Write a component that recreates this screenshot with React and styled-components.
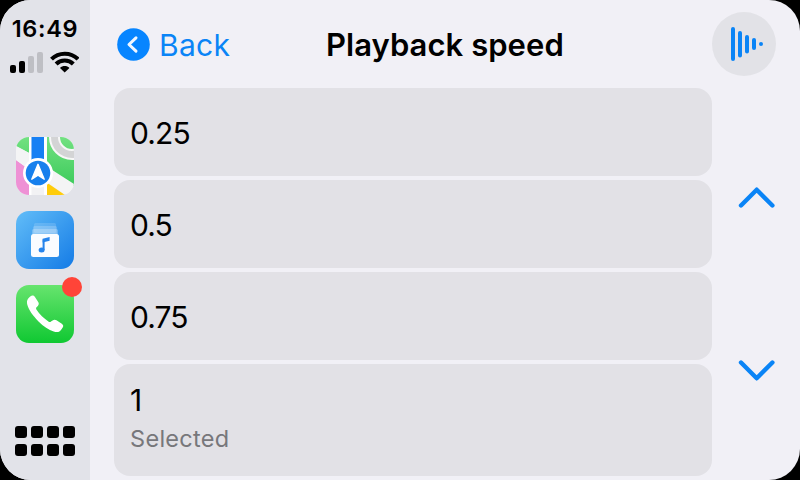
import React from "react";
import styled, { createGlobalStyle } from "styled-components";

const GlobalStyle = createGlobalStyle`
  * { box-sizing: border-box; }
  body { margin: 0; background: #000; }
`;

const Screen = styled.div`
  width: 800px;
  height: 480px;
  display: flex;
  overflow: hidden;
  border-radius: 31px;
  background: #f1f0f6;
  color: #000;
  font-family: Inter, "Liberation Sans", sans-serif;
`;

const Sidebar = styled.aside`
  width: 90px;
  flex: none;
  display: flex;
  flex-direction: column;
  align-items: center;
  padding: 15px 0 24px;
  background: #e2e3e9;
`;

const Clock = styled.div`
  height: 28px;
  line-height: 28px;
  font-size: 23.5px;
  font-weight: 570;
  letter-spacing: 0.7px;
  white-space: nowrap;
`;

const StatusRow = styled.div`
  display: flex;
  align-items: flex-end;
  gap: 7px;
  height: 22px;
  margin: 8px 2px 0 0;
`;

const SignalBars = styled.div`
  display: flex;
  align-items: flex-end;
  gap: 3px;
`;

const Bar = styled.span`
  width: 6px;
  height: ${(p) => p.$height}px;
  border-radius: 2px;
  background: ${(p) => (p.$active ? "#000" : "#bebfc4")};
`;

const Dock = styled.nav`
  display: flex;
  flex-direction: column;
  gap: 16px;
  margin-top: 64px;
`;

const AppButton = styled.button`
  position: relative;
  width: 58px;
  height: 58px;
  padding: 0;
  border: 0;
  background: none;
`;

const AppIcon = styled.svg`
  display: block;
  border-radius: 13px;
`;

const Badge = styled.span`
  position: absolute;
  top: -8px;
  right: -8px;
  width: 20px;
  height: 20px;
  border-radius: 50%;
  background: #ff4438;
`;

const HomeGrid = styled.div`
  display: grid;
  grid-template-columns: repeat(4, 12px);
  gap: 6px 4px;
  margin-top: auto;
`;

const HomeCell = styled.span`
  height: 12px;
  border-radius: 3px;
  background: #000;
`;

const Main = styled.main`
  width: 710px;
  flex: none;
  display: flex;
  flex-direction: column;
  padding-left: 24px;
`;

const Header = styled.header`
  height: 88px;
  flex: none;
  display: grid;
  grid-template-columns: 213px 1fr 88px;
  align-items: center;
`;

const BackButton = styled.button`
  display: flex;
  align-items: center;
  gap: 9px;
  padding: 0 0 0 3px;
  border: 0;
  background: none;
  color: #0a84f6;
  font: 400 30px/36px Inter, "Liberation Sans", sans-serif;
  letter-spacing: 0.3px;
`;

const BackLabel = styled.span`
  padding-top: 2px;
`;

const Title = styled.h1`
  margin: 2px 0 0 -1px;
  font-size: 31px;
  line-height: 36px;
  font-weight: 600;
  letter-spacing: 0.05px;
  white-space: nowrap;
`;

const NowPlaying = styled.button`
  display: grid;
  place-items: center;
  width: 64px;
  height: 64px;
  padding: 0;
  border: 0;
  border-radius: 50%;
  background: #e2e2e7;
`;

const Content = styled.div`
  flex: 1;
  display: flex;
`;

const List = styled.div`
  width: 598px;
  flex: none;
  display: flex;
  flex-direction: column;
  gap: 4px;
`;

const Row = styled.div`
  height: ${(p) => (p.$tall ? 112 : 88)}px;
  display: flex;
  flex-direction: column;
  justify-content: center;
  gap: ${(p) => (p.$tall ? 6 : 0)}px;
  padding: ${(p) => (p.$tall ? "0 16px 4px" : "1px 16px 0")};
  border-radius: 16px;
  background: #e2e1e6;
`;

const Speed = styled.span`
  font-size: 30px;
  line-height: 36px;
  letter-spacing: -0.9px;
`;

const Detail = styled.span`
  font-size: 23.5px;
  line-height: 30px;
  letter-spacing: 0.3px;
  color: #77777b;
`;

const Scroller = styled.div`
  flex: 1;
  height: 294px;
  display: flex;
  flex-direction: column;
  align-items: center;
  justify-content: space-between;
  padding: 98px 0 0 2px;
`;

const ScrollButton = styled.button`
  display: block;
  width: 38px;
  height: 24px;
  padding: 0;
  border: 0;
  background: none;
  transform: ${(p) => (p.$down ? "scaleY(-1)" : "none")};
`;

function WifiIcon() {
  return (
    <svg width="29" height="22" viewBox="0 0 29 22">
      <g fill="none" stroke="#000" strokeWidth="4">
        <path d="M1.5 8.2C8.6 .8 20.9 .8 28 8.2" />
        <path d="M6.1 13C10.7 8.2 18.7 8.2 23.3 13" />
      </g>
      <path d="M10 16.9C12.5 14.3 16.9 14.3 19.4 16.9L14.7 21.6Z" />
    </svg>
  );
}

function MapsIcon() {
  return (
    <AppIcon width="58" height="58" viewBox="0 0 58 58">
      <defs>
        <linearGradient id="mapGreen" x1="0" y1="0" x2="0" y2="1">
          <stop stopColor="#72e181" />
          <stop offset="1" stopColor="#3ccb5b" />
        </linearGradient>
      </defs>
      <path fill="#f2f2f4" d="M0 0H58V58H0Z" />
      <path fill="url(#mapGreen)" d="M0 0H15V17L0 9ZM30 0H58V49L30 30Z" />
      <circle cx="56" cy="0" r="17.5" fill="none" stroke="#f7f7f7" strokeWidth="11" />
      <circle cx="56" cy="0" r="17.5" fill="none" stroke="#d3d4d5" strokeWidth="7" />
      <path fill="#ee91d5" d="M0 23L14 33V58H0Z" />
      <path fill="#f4f4f5" d="M0 9L15 17V34L0 23ZM30 29L58 47V58H50L30 44Z" />
      <path fill="#ffcc0a" d="M30 45L49 58H30Z" />
      <path fill="#fff" d="M13 0H15.5V58H13ZM28 0H31V58H28Z" />
      <path fill="#1680f4" d="M15.5 0H28V30H15.5Z" />
      <circle cx="22" cy="36" r="15" fill="#fff" />
      <circle cx="22" cy="36" r="12.3" fill="#1780ed" />
      <path
        fill="#fff"
        stroke="#fff"
        strokeWidth="1.4"
        strokeLinejoin="round"
        d="M22 27.3L28.2 42.2L22 38.2L15.8 42.2Z"
      />
    </AppIcon>
  );
}

function MusicIcon() {
  return (
    <AppIcon width="58" height="58" viewBox="0 0 58 58">
      <defs>
        <linearGradient id="musicBlue" x1="0" y1="0" x2="1" y2="1">
          <stop stopColor="#62bdf8" />
          <stop offset="1" stopColor="#147be6" />
        </linearGradient>
      </defs>
      <path fill="url(#musicBlue)" d="M0 0H58V58H0Z" />
      <rect x="18" y="12" width="22" height="10" rx="1.5" fill="#fff" opacity=".15" />
      <rect x="17" y="15" width="24" height="10" rx="1.5" fill="#fff" opacity=".2" />
      <rect x="16" y="18" width="26" height="9" rx="1.5" fill="#fff" opacity=".25" />
      <rect x="15" y="23" width="28" height="23" rx="2.5" fill="#fafcff" />
      <path fill="none" stroke="#2684ec" strokeWidth="2" d="M27.6 38.9V28.5" />
      <path fill="#2684ec" d="M26.6 27.7L33.6 26V29.7L26.6 31.4Z" />
      <ellipse cx="25.6" cy="39" rx="3" ry="2.5" fill="#2684ec" />
    </AppIcon>
  );
}

function PhoneIcon() {
  return (
    <AppIcon width="58" height="58" viewBox="0 0 58 58">
      <defs>
        <linearGradient id="phoneGreen" x1="0" y1="0" x2="0" y2="1">
          <stop stopColor="#67e46e" />
          <stop offset="1" stopColor="#10c832" />
        </linearGradient>
      </defs>
      <path fill="url(#phoneGreen)" d="M0 0H58V58H0Z" />
      <path
        fill="#fff"
        d="M14.6 11.2C16 10.1 17.8 10.4 18.8 11.8L22.2 17C23.1 18.4 22.9 19.8 21.8 20.9L20.5 22.3C19.9 23 20 23.8 20.4 24.5C23.5 29.2 27.9 33.5 32.7 36.7C33.5 37.2 34.3 37.3 35 36.6L36.6 35.5C37.8 34.5 39.2 34.5 40.5 35.3L45.8 38.7C47.4 39.8 47.6 41.2 46.7 42.6L44.8 45.2C43.2 47.3 40.6 47.4 37.7 46.5C32.8 45 27.5 41.3 22.5 36.4C16.9 30.9 12.7 24.9 11.4 20.1C10.5 16.3 11 13.8 14.6 11.2Z"
      />
    </AppIcon>
  );
}

function SpeedWaveIcon() {
  return (
    <svg width="40" height="40" viewBox="0 0 40 40">
      <path
        fill="none"
        stroke="#0a84f6"
        strokeWidth="4"
        strokeLinecap="round"
        d="M9 5V35M16 9V31.5M23 13V27.5M30 16V24M37 20V20.01"
      />
    </svg>
  );
}

function Chevron() {
  return (
    <svg width="38" height="24" viewBox="0 0 38 24">
      <path
        d="M3 19.5L18.7 3.7L34.4 19.5"
        fill="none"
        stroke="#0a84f6"
        strokeWidth="4.4"
        strokeLinecap="round"
        strokeLinejoin="round"
      />
    </svg>
  );
}

const signal = [8, 12, 17, 21];

const speeds = [
  { value: "0.25" },
  { value: "0.5" },
  { value: "0.75" },
  { value: "1", detail: "Selected" },
];

export default function App() {
  return (
    <>
      <GlobalStyle />
      <Screen>
        <Sidebar>
          <Clock>16:49</Clock>
          <StatusRow>
            <SignalBars>
              {signal.map((height, i) => (
                <Bar key={height} $height={height} $active={i < 2} />
              ))}
            </SignalBars>
            <WifiIcon />
          </StatusRow>
          <Dock>
            <AppButton aria-label="Maps"><MapsIcon /></AppButton>
            <AppButton aria-label="Music"><MusicIcon /></AppButton>
            <AppButton aria-label="Phone"><PhoneIcon /><Badge /></AppButton>
          </Dock>
          <HomeGrid>
            {Array.from({ length: 8 }, (_, i) => <HomeCell key={i} />)}
          </HomeGrid>
        </Sidebar>
        <Main>
          <Header>
            <BackButton>
              <svg width="33" height="33" viewBox="0 0 33 33">
                <circle cx="16.5" cy="16.5" r="16.3" fill="#0785ff" />
                <path
                  d="M19 9.8L12 16.5L19 23.2"
                  fill="none"
                  stroke="#f2f7ff"
                  strokeWidth="3"
                  strokeLinecap="round"
                  strokeLinejoin="round"
                />
              </svg>
              <BackLabel>Back</BackLabel>
            </BackButton>
            <Title>Playback speed</Title>
            <NowPlaying aria-label="Now playing"><SpeedWaveIcon /></NowPlaying>
          </Header>
          <Content>
            <List>
              {speeds.map(({ value, detail }) => (
                <Row key={value} $tall={Boolean(detail)}>
                  <Speed>{value}</Speed>
                  {detail && <Detail>{detail}</Detail>}
                </Row>
              ))}
            </List>
            <Scroller>
              <ScrollButton aria-label="Scroll up"><Chevron /></ScrollButton>
              <ScrollButton $down aria-label="Scroll down"><Chevron /></ScrollButton>
            </Scroller>
          </Content>
        </Main>
      </Screen>
    </>
  );
}
